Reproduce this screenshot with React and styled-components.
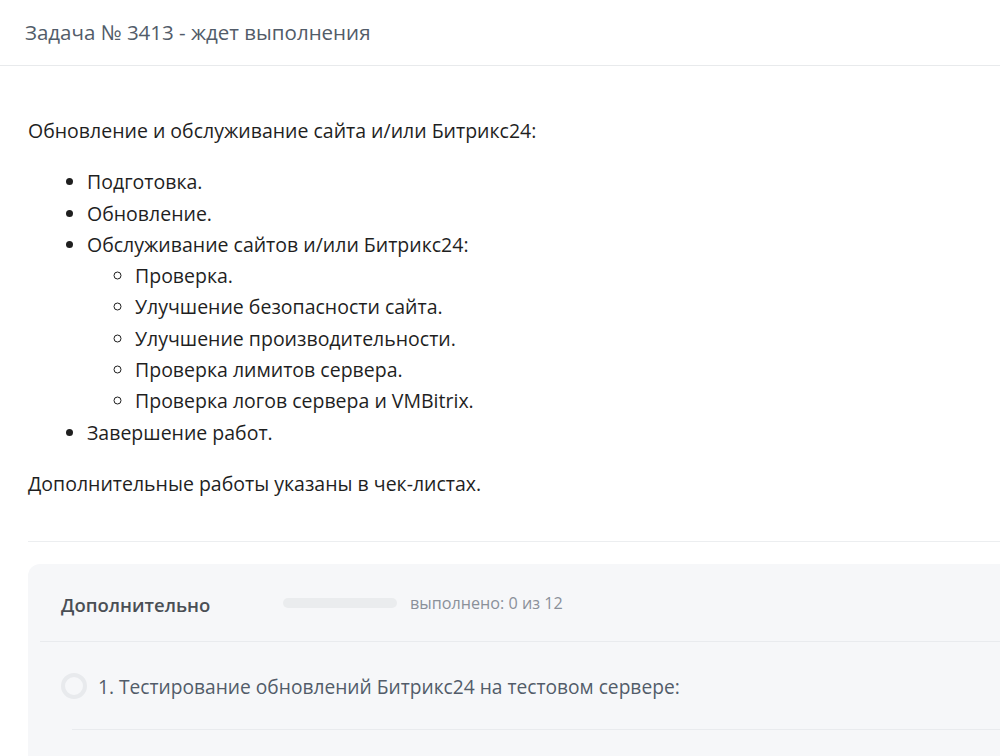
import React from "react";
import styled, { createGlobalStyle } from "styled-components";

const GlobalStyle = createGlobalStyle`
  html, body {
    margin: 0;
    padding: 0;
    background: #fff;
  }
  body {
    font-family: "Open Sans", "Noto Sans", "Liberation Sans", sans-serif;
    color: #222;
  }
`;

const podpunkty = [
  "Проверка.",
  "Улучшение безопасности сайта.",
  "Улучшение производительности.",
  "Проверка лимитов сервера.",
  "Проверка логов сервера и VMBitrix.",
];

const App = () => {
  return (
    <Page>
      <GlobalStyle />
      <Header>
        <Titulo>Задача № 3413 - ждет выполнения</Titulo>
      </Header>

      <Descricao>
        <Texto>Обновление и обслуживание сайта и/или Битрикс24:</Texto>
        <Lista>
          <Item>Подготовка.</Item>
          <Item>Обновление.</Item>
          <Item>
            Обслуживание сайтов и/или Битрикс24:
            <SubLista>
              {podpunkty.map((p, i) => (
                <Item key={i}>{p}</Item>
              ))}
            </SubLista>
          </Item>
          <Item>Завершение работ.</Item>
        </Lista>
        <Texto>Дополнительные работы указаны в чек-листах.</Texto>
      </Descricao>

      <Separador />

      <Painel>
        <PainelTopo>
          <PainelTitulo>Дополнительно</PainelTitulo>
          <Progresso>
            <ProgressoFill style={{ width: `${(0 / 12) * 100}%` }} />
          </Progresso>
          <ProgressoInfo>выполнено: 0 из 12</ProgressoInfo>
        </PainelTopo>
        <Tarefa>
          <Circulo />
          <TarefaTexto>1. Тестирование обновлений Битрикс24 на тестовом сервере:</TarefaTexto>
        </Tarefa>
      </Painel>
    </Page>
  );
};

const Page = styled.div`
  width: 1000px;
  height: 756px;
  overflow: hidden;
  background: #fff;
`;

const Header = styled.div`
  height: 66px;
  display: flex;
  align-items: center;
  padding: 0 25px;
  border-bottom: 1px solid #e8eaec;
  box-sizing: border-box;
`;

const Titulo = styled.div`
  font-size: 20.5px;
  color: #525c69;
  margin-top: -1px;
`;

const Descricao = styled.div`
  padding: 49px 28px 0 28px;
  font-size: 19.5px;
  line-height: 31.3px;
  color: #1f1f1f;
`;

const Texto = styled.p`
  margin: 0;
`;

const Lista = styled.ul`
  margin: 20px 0 20px 0;
  padding-left: 59px;
  list-style: disc;
`;

const SubLista = styled.ul`
  margin: 0;
  padding-left: 48px;
  list-style: circle;
`;

const Item = styled.li``;

const Separador = styled.div`
  height: 1px;
  background: #eceef0;
  margin: 42px 0 0 28px;
`;

const Painel = styled.div`
  margin: 22px 0 0 28px;
  background: #f6f7f9;
  border-top-left-radius: 12px;
  padding: 0 0 0 12px;
  height: 220px;
`;

const PainelTopo = styled.div`
  display: flex;
  align-items: center;
  height: 77px;
  padding-left: 21px;
  border-bottom: 1px solid #e9ebee;
`;

const PainelTitulo = styled.div`
  font-size: 18.5px;
  font-weight: 600;
  color: #4a4f55;
  width: 222px;
  margin-top: 3px;
`;

const Progresso = styled.div`
  width: 114px;
  height: 10px;
  border-radius: 5px;
  background: #eaecee;
  overflow: hidden;
`;

const ProgressoFill = styled.div`
  height: 100%;
  background: #2fc6f6;
`;

const ProgressoInfo = styled.div`
  margin-left: 13px;
  font-size: 16.2px;
  color: #8a9099;
`;

const Tarefa = styled.div`
  display: flex;
  align-items: center;
  height: 88px;
  padding-left: 21px;
  position: relative;

  &::after {
    content: "";
    position: absolute;
    left: 32px;
    right: 0;
    bottom: 0;
    height: 1px;
    background: #e9ebee;
  }
`;

const Circulo = styled.div`
  width: 18px;
  height: 18px;
  border-radius: 50%;
  border: 4px solid #e8eaed;
  margin-right: 11px;
  flex-shrink: 0;
`;

const TarefaTexto = styled.div`
  font-size: 19.2px;
  color: #525c69;
`;

export default App;
